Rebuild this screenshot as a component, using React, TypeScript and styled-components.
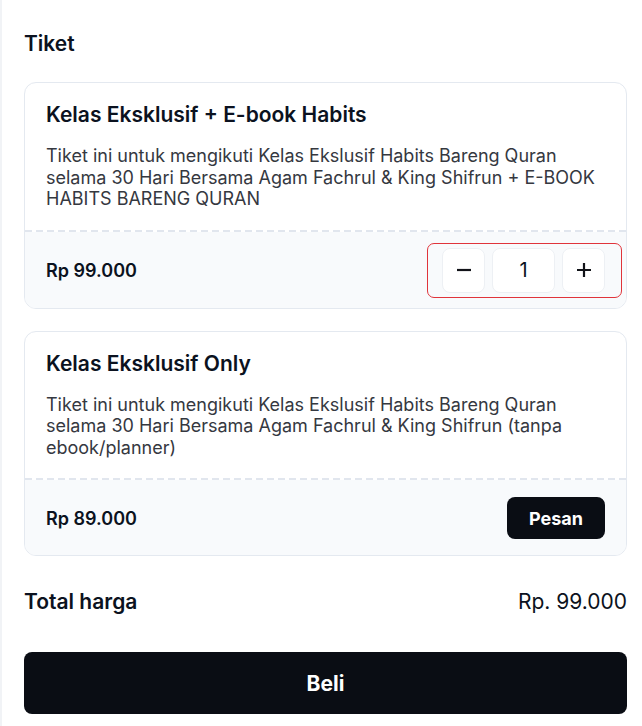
import React from "react";
import styled, { createGlobalStyle } from "styled-components";

const GlobalStyle = createGlobalStyle`
  body {
    margin: 0;
    background: #ffffff;
    font-family: Inter, "Noto Sans", sans-serif;
    color: #0b1220;
  }
`;

const Page = styled.div`
  border-left: 2px solid #f1f3f6;
  padding: 31px 15px 10px 22px;
  min-height: 726px;
  box-sizing: border-box;
`;

const Heading = styled.h2`
  margin: 0 0 25px;
  font-size: 21px;
  line-height: 26px;
  font-weight: 600;
`;

const CardList = styled.div`
  display: flex;
  flex-direction: column;
  gap: 22px;
`;

const Card = styled.div`
  border: 1px solid #e4e9f0;
  border-radius: 12px;
  overflow: hidden;
`;

const CardBody = styled.div`
  padding: 19px 21px 20px;
`;

const Divider = styled.div`
  height: 2px;
  background: repeating-linear-gradient(
    to right,
    #e1e6ee 0 7px,
    transparent 7px 11px
  );
`;

const CardTitle = styled.h3`
  margin: 0 0 17px;
  font-size: 21px;
  line-height: 26px;
  font-weight: 600;
`;

const CardText = styled.p`
  margin: 0;
  font-size: 18px;
  line-height: 21.5px;
  color: #35383f;
`;

const CardFooter = styled.div<{ $pad: number }>`
  display: flex;
  align-items: center;
  justify-content: space-between;
  background: #f8fafc;
  padding: ${(p) => p.$pad}px 21px ${(p) => p.$pad - 1}px;
`;

const Price = styled.span`
  font-size: 18px;
  font-weight: 600;
`;

const QtyGroup = styled.div`
  display: flex;
  align-items: center;
  gap: 7px;
  margin-right: -17px;
  padding: 4px 16px 4px 14px;
  border: 1.5px solid #e0343b;
  border-radius: 7px;
`;

const QtyButton = styled.button`
  width: 43px;
  height: 45px;
  border: 1.5px solid #edf0f4;
  border-radius: 8px;
  background: #ffffff;
  display: flex;
  align-items: center;
  justify-content: center;
  padding: 0;
  color: #111318;
`;

const QtyValue = styled.div`
  width: 63px;
  height: 45px;
  border: 1.5px solid #edf0f4;
  border-radius: 8px;
  background: #ffffff;
  display: flex;
  align-items: center;
  justify-content: center;
  font-size: 20px;
  box-sizing: border-box;
`;

const OrderButton = styled.button`
  height: 42px;
  padding: 0 22px;
  border: none;
  border-radius: 8px;
  background: #0a0d14;
  color: #ffffff;
  font-family: inherit;
  font-size: 18px;
  font-weight: 700;
`;

const TotalRow = styled.div`
  display: flex;
  justify-content: space-between;
  align-items: center;
  margin: 33px 0 37px;
  font-size: 21px;
  line-height: 26px;
`;

const TotalLabel = styled.span`
  font-weight: 600;
`;

const TotalValue = styled.span`
  font-weight: 400;
`;

const BuyButton = styled.button`
  width: 100%;
  height: 62px;
  border: none;
  border-radius: 8px;
  background: #0a0d14;
  color: #ffffff;
  font-family: inherit;
  font-size: 21px;
  font-weight: 700;
`;

const Minus = () => (
  <svg width="18" height="18" viewBox="0 0 18 18">
    <path d="M2 9h14" stroke="currentColor" strokeWidth="2.2" />
  </svg>
);

const Plus = () => (
  <svg width="18" height="18" viewBox="0 0 18 18">
    <path d="M2 9h14M9 2v14" stroke="currentColor" strokeWidth="2.2" />
  </svg>
);

const App = () => {
  return (
    <>
      <GlobalStyle />
      <Page>
        <Heading>Tiket</Heading>
        <CardList>
          <Card>
            <CardBody>
              <CardTitle>Kelas Eksklusif + E-book Habits</CardTitle>
              <CardText>
                Tiket ini untuk mengikuti Kelas Ekslusif Habits Bareng Quran
                selama 30 Hari Bersama Agam Fachrul &amp; King Shifrun + E-BOOK
                HABITS BARENG QURAN
              </CardText>
            </CardBody>
            <Divider />
            <CardFooter $pad={11}>
              <Price>Rp 99.000</Price>
              <QtyGroup>
                <QtyButton>
                  <Minus />
                </QtyButton>
                <QtyValue>1</QtyValue>
                <QtyButton>
                  <Plus />
                </QtyButton>
              </QtyGroup>
            </CardFooter>
          </Card>
          <Card>
            <CardBody>
              <CardTitle>Kelas Eksklusif Only</CardTitle>
              <CardText>
                Tiket ini untuk mengikuti Kelas Ekslusif Habits Bareng Quran
                selama 30 Hari Bersama Agam Fachrul &amp; King Shifrun (tanpa
                ebook/planner)
              </CardText>
            </CardBody>
            <Divider />
            <CardFooter $pad={17}>
              <Price>Rp 89.000</Price>
              <OrderButton>Pesan</OrderButton>
            </CardFooter>
          </Card>
        </CardList>
        <TotalRow>
          <TotalLabel>Total harga</TotalLabel>
          <TotalValue>Rp. 99.000</TotalValue>
        </TotalRow>
        <BuyButton>Beli</BuyButton>
      </Page>
    </>
  );
};

export default App;
